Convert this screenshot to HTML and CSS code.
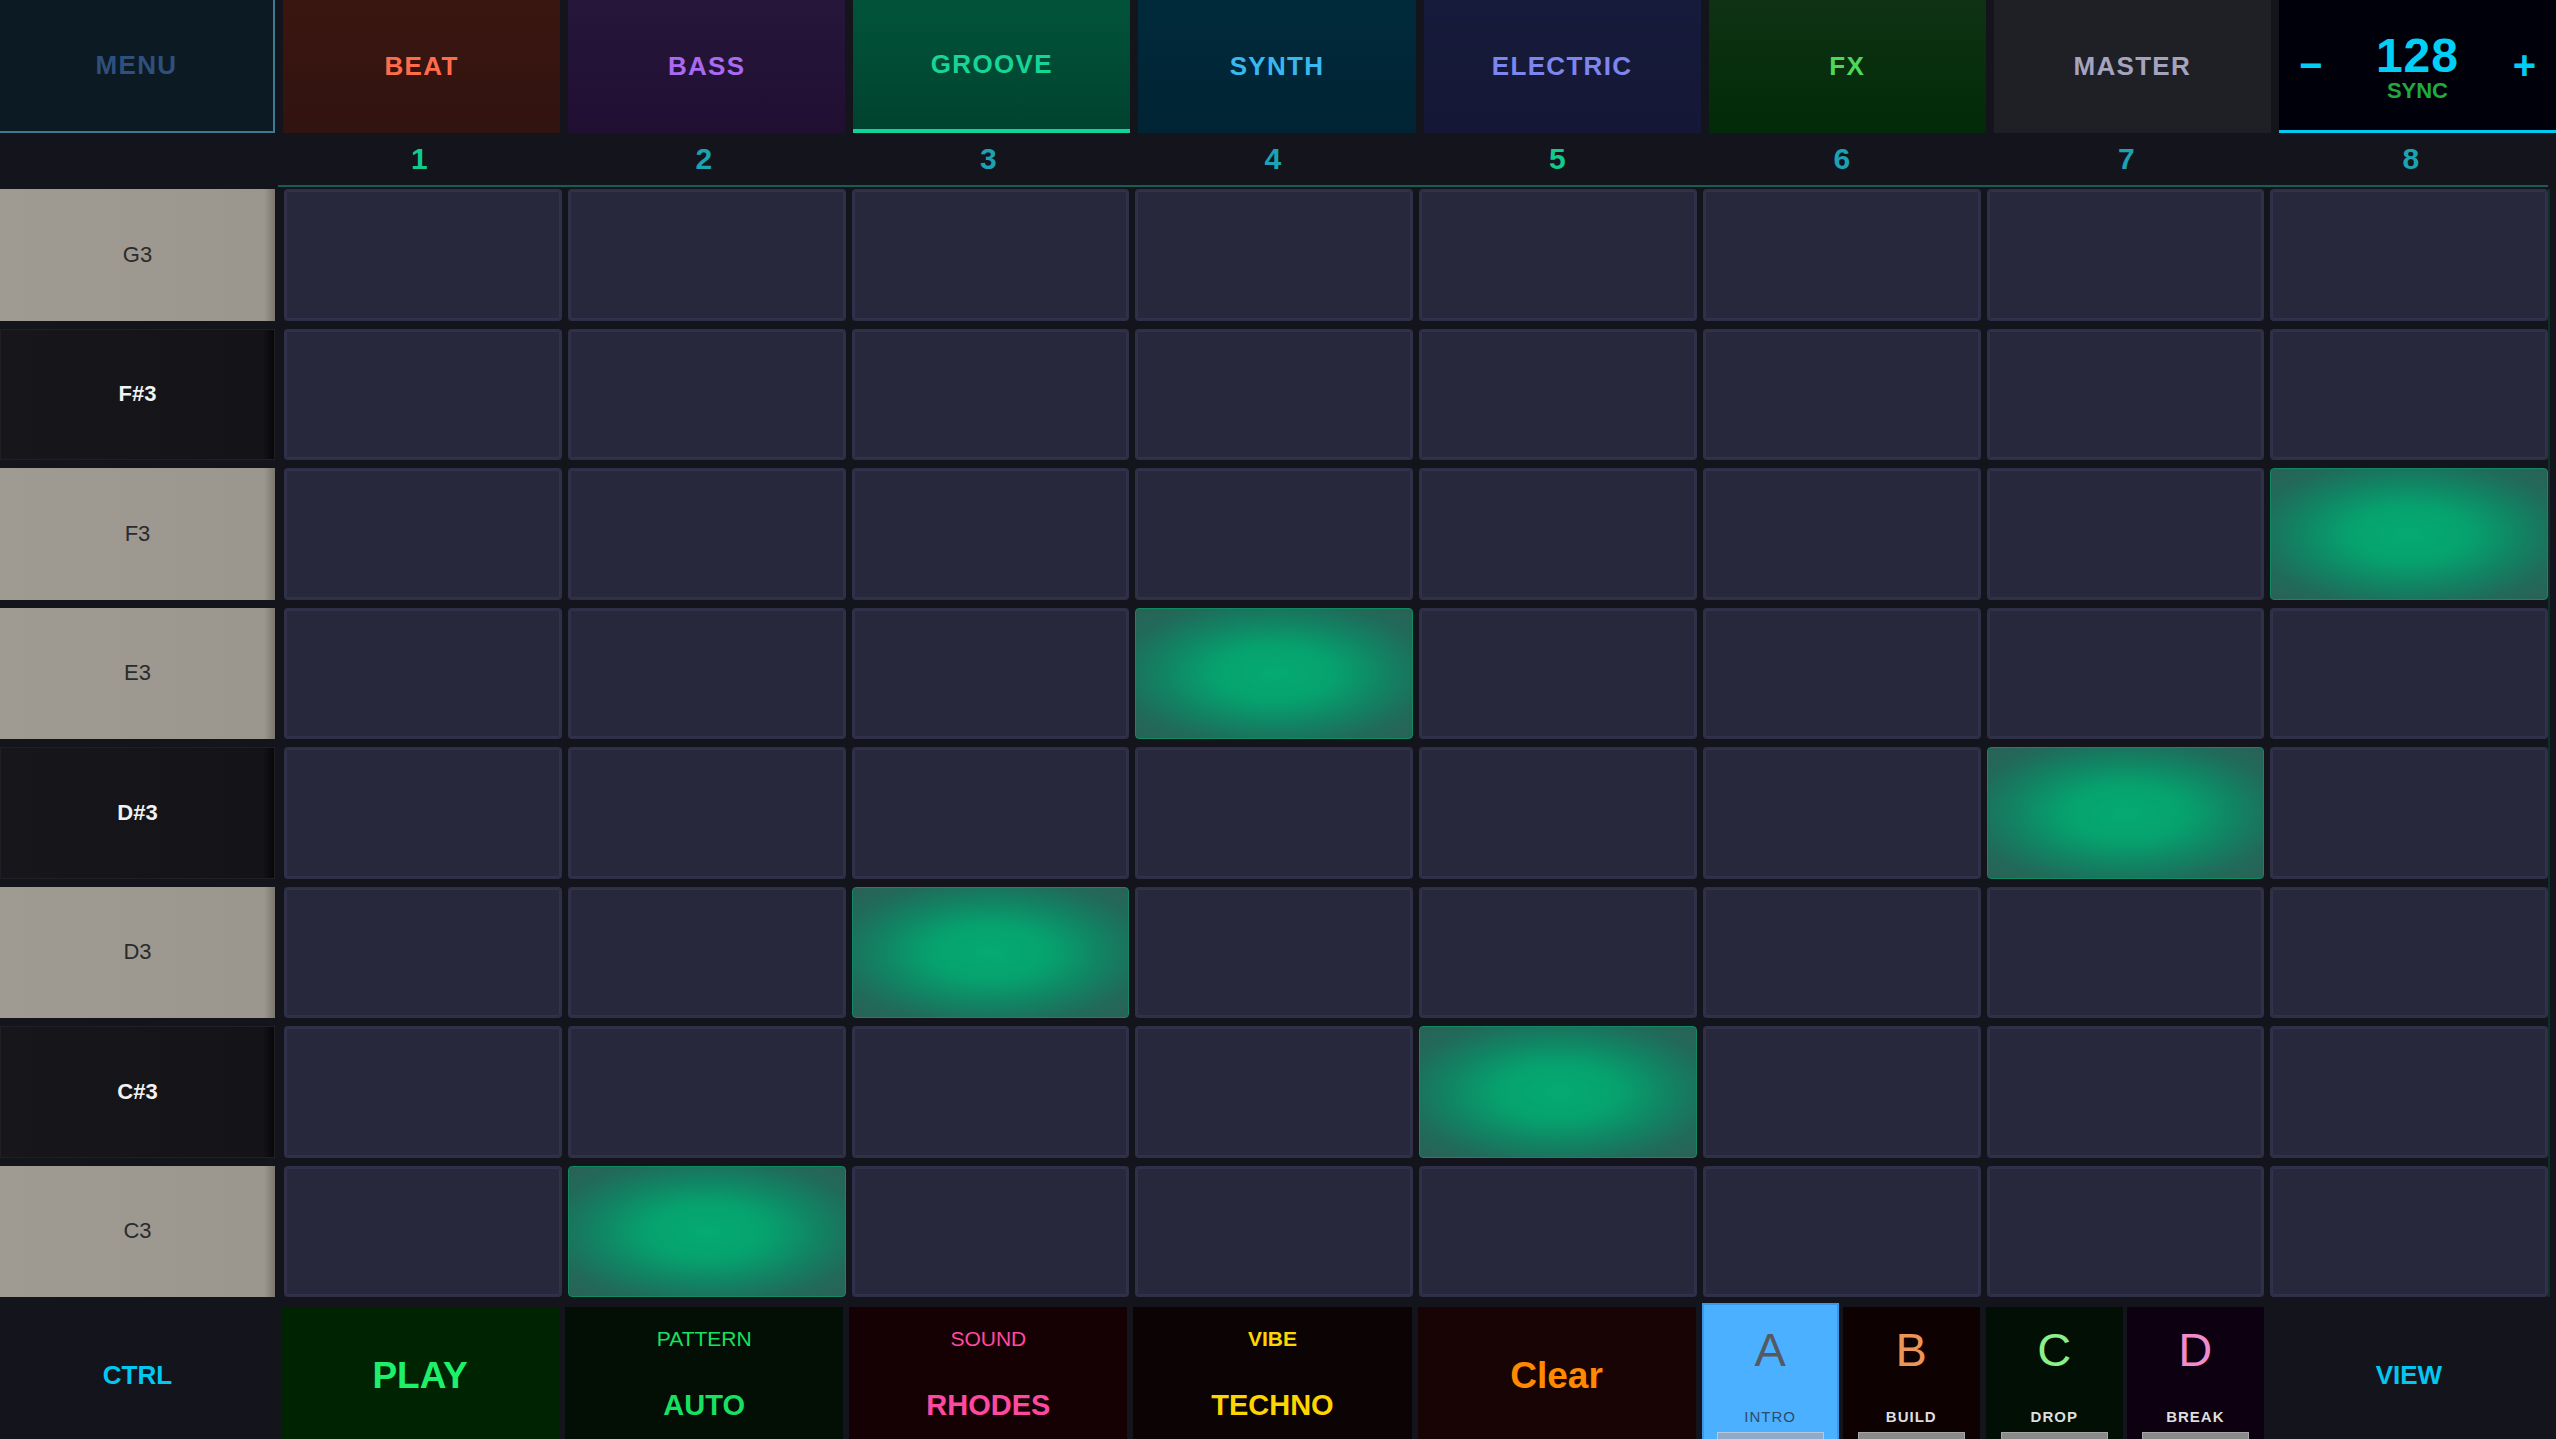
FILE: index.html
```html
<!DOCTYPE html>
<html lang="en">
<head>
    <meta charset="UTF-8">
    <meta name="viewport" content="width=device-width, initial-scale=1.0">
    <title>Groove Sequencer</title>
    <link rel="stylesheet" href="styles.css">
</head>
<body>
    <div class="app">
        <nav class="tabs">
            <div class="tab tab-menu">MENU</div>
            <div class="tab tab-beat">BEAT</div>
            <div class="tab tab-bass">BASS</div>
            <div class="tab tab-groove">GROOVE</div>
            <div class="tab tab-synth">SYNTH</div>
            <div class="tab tab-electric">ELECTRIC</div>
            <div class="tab tab-fx">FX</div>
            <div class="tab tab-master">MASTER</div>
            <div class="tab tab-bpm">
                <span class="bpm-btn">&minus;</span>
                <div class="bpm-value">
                    <span class="bpm-num">128</span>
                    <span class="bpm-sync">SYNC</span>
                </div>
                <span class="bpm-btn">+</span>
            </div>
        </nav>

        <div class="steps">
            <div class="step-nums">
                <div class="step down">1</div>
                <div class="step">2</div>
                <div class="step">3</div>
                <div class="step">4</div>
                <div class="step down">5</div>
                <div class="step">6</div>
                <div class="step">7</div>
                <div class="step">8</div>
            </div>
        </div>

        <div class="roll" id="roll"></div>

        <footer class="controls">
            <div class="ctl ctl-text">CTRL</div>
            <div class="ctl ctl-play">PLAY</div>
            <div class="ctl ctl-dual ctl-pattern">
                <span class="ctl-label">PATTERN</span>
                <span class="ctl-value">AUTO</span>
            </div>
            <div class="ctl ctl-dual ctl-sound">
                <span class="ctl-label">SOUND</span>
                <span class="ctl-value">RHODES</span>
            </div>
            <div class="ctl ctl-dual ctl-vibe">
                <span class="ctl-label">VIBE</span>
                <span class="ctl-value">TECHNO</span>
            </div>
            <div class="ctl ctl-clear">Clear</div>
            <div class="pads">
                <div class="pad pad-a">
                    <span class="pad-letter">A</span>
                    <span class="pad-name">INTRO</span>
                    <span class="pad-bar"></span>
                </div>
                <div class="pad pad-b">
                    <span class="pad-letter">B</span>
                    <span class="pad-name">BUILD</span>
                    <span class="pad-bar"></span>
                </div>
            </div>
            <div class="pads">
                <div class="pad pad-c">
                    <span class="pad-letter">C</span>
                    <span class="pad-name">DROP</span>
                    <span class="pad-bar"></span>
                </div>
                <div class="pad pad-d">
                    <span class="pad-letter">D</span>
                    <span class="pad-name">BREAK</span>
                    <span class="pad-bar"></span>
                </div>
            </div>
            <div class="ctl ctl-text">VIEW</div>
        </footer>
    </div>

    <script>
        const notes = ['G3', 'F#3', 'F3', 'E3', 'D#3', 'D3', 'C#3', 'C3'];
        // step that is switched on for each note
        const active = { 'F3': 8, 'E3': 4, 'D#3': 7, 'D3': 3, 'C#3': 5, 'C3': 2 };

        const roll = document.getElementById('roll');
        notes.forEach(note => {
            const row = document.createElement('div');
            row.className = 'row';

            const key = document.createElement('div');
            key.className = 'key ' + (note.includes('#') ? 'key-black' : 'key-white');
            key.innerText = note;
            row.appendChild(key);

            for (let step = 1; step <= 8; step++) {
                const cell = document.createElement('div');
                cell.className = 'cell' + (active[note] === step ? ' on' : '');
                row.appendChild(cell);
            }
            roll.appendChild(row);
        });
    </script>
</body>
</html>
```

FILE: styles.css
```css
body {
    margin: 0;
    background: #14141c;
    font-family: 'Liberation Sans', Arial, sans-serif;
}
.app {
    width: 2556px;
    height: 1439px;
    overflow: hidden;
    display: flex;
    flex-direction: column;
}

/* top tabs */
.tabs {
    display: grid;
    grid-template-columns: 275px repeat(8, 1fr);
    column-gap: 8px;
    height: 133px;
    flex-shrink: 0;
}
.tab {
    display: flex;
    align-items: center;
    justify-content: center;
    font-size: 26px;
    font-weight: bold;
    letter-spacing: 1.3px;
    box-sizing: border-box;
}
.tab-menu {
    background: #0b1a23;
    color: #2f507d;
    border-right: 2px solid #3b7b94;
    border-bottom: 2px solid #3b7b94;
}
.tab-beat {
    background: linear-gradient(#3b1610, #311310);
    color: #ff6c4b;
}
.tab-bass {
    background: linear-gradient(#25163a, #210f32);
    color: #aa6af0;
}
.tab-groove {
    background: linear-gradient(#02533a, #00432f);
    color: #16d596;
    border-bottom: 4px solid #12d49a;
}
.tab-synth {
    background: linear-gradient(#002a3b, #002434);
    color: #3ab7ee;
}
.tab-electric {
    background: linear-gradient(#171b3b, #141735);
    color: #7d85ee;
}
.tab-fx {
    background: linear-gradient(#0f3214, #012a08);
    color: #4ed85a;
}
.tab-master {
    background: #1f1f26;
    color: #a5a3be;
}
.tab-bpm {
    background: #00000a;
    border-bottom: 3px solid #00c9f2;
    justify-content: space-between;
    padding: 0 20px;
    letter-spacing: 0;
}
.bpm-btn {
    color: #00cdf5;
    font-size: 40px;
}
.bpm-value {
    display: flex;
    flex-direction: column;
    align-items: center;
    margin-top: 4px;
}
.bpm-num {
    color: #00cff6;
    font-size: 48px;
    line-height: 48px;
    letter-spacing: 1px;
}
.bpm-sync {
    color: #22a93d;
    font-size: 22px;
    line-height: 22px;
}

/* step numbers */
.steps {
    display: grid;
    grid-template-columns: 278px 1fr;
    height: 54px;
    margin-right: 8px;
    flex-shrink: 0;
}
.step-nums {
    grid-column: 2;
    display: grid;
    grid-template-columns: repeat(8, 1fr);
    column-gap: 6px;
    border-bottom: 2px solid #1b5c52;
}
.step {
    display: flex;
    align-items: center;
    justify-content: center;
    padding-left: 4px;
    font-size: 30px;
    font-weight: bold;
    color: #1ca3b3;
}
.step.down {
    color: #12c98e;
}

/* piano roll */
.roll {
    display: grid;
    grid-template-rows: repeat(8, 1fr);
    row-gap: 8px;
    height: 1108px;
    margin-top: 2px;
    margin-right: 6px;
    border-right: 2px solid #0f2f2b;
    flex-shrink: 0;
}
.row {
    display: grid;
    grid-template-columns: 278px repeat(8, 1fr);
    column-gap: 6px;
}
.key {
    width: 275px;
    box-sizing: border-box;
    display: flex;
    align-items: center;
    justify-content: center;
    font-size: 22px;
}
.key-white {
    background: linear-gradient(to right, #9f9b93 0%, #9b978e 96%, #7a766e 100%);
    color: #2b2b2b;
}
.key-black {
    background: linear-gradient(to right, #16161b 0%, #131318 96%, #08080b 100%);
    border: 1px solid #1f1f25;
    color: #f2f2f2;
    font-weight: bold;
}
.cell {
    background: #28283c;
    border: 2px solid #302f48;
    border-radius: 4px;
    box-shadow: inset 0 0 0 1px #33324c;
}
.cell.on {
    background: radial-gradient(ellipse farthest-corner at center, #05aa72 0%, #06a26e 30%, #128262 58%, #216a5a 80%, #2a6157 100%);
    border: 1px solid #0f8a63;
    box-shadow: none;
}

/* bottom controls */
.controls {
    display: grid;
    grid-template-columns: 275px repeat(8, 1fr);
    column-gap: 6px;
    height: 132px;
    margin-top: 10px;
    padding-right: 8px;
    flex-shrink: 0;
}
.ctl {
    display: flex;
    flex-direction: column;
    align-items: center;
    justify-content: center;
    font-weight: bold;
}
.ctl-text {
    color: #00c8f0;
    font-size: 26px;
}
.ctl-play {
    background: #002402;
    color: #1ef06c;
    font-size: 37px;
}
.ctl-dual {
    gap: 37px;
    padding-bottom: 3px;
}
.ctl-label {
    font-size: 21px;
    line-height: 24px;
    font-weight: normal;
}
.ctl-value {
    font-size: 29px;
    line-height: 34px;
}
.ctl-pattern {
    background: #030e05;
    color: #18e060;
}
.ctl-sound {
    background: #150104;
    color: #ff49a0;
}
.ctl-vibe {
    background: #0b0304;
    color: #ffd500;
}
.ctl-vibe .ctl-label {
    font-weight: bold;
}
.ctl-clear {
    background: #180404;
    color: #ff8a00;
    font-size: 37px;
}

.pads {
    display: grid;
    grid-template-columns: 1fr 1fr;
    column-gap: 4px;
}
.pad {
    display: flex;
    flex-direction: column;
    align-items: center;
    padding-top: 18px;
    box-sizing: border-box;
}
.pad-letter {
    font-size: 47px;
    line-height: 50px;
}
.pad-name {
    margin-top: 32px;
    font-size: 15px;
    line-height: 20px;
    font-weight: bold;
    letter-spacing: 1px;
    color: #dedede;
}
.pad-bar {
    width: 105px;
    height: 10px;
    margin-top: 5px;
    flex-shrink: 0;
    background: #8a8a8a;
    border: 1px solid #a6a6a6;
}
.pad-a {
    background: #4ab0ff;
    border: 2px solid #3b98e6;
    border-bottom: none;
    margin-top: -4px;
    padding-top: 20px;
}
.pad-a .pad-letter {
    color: #555962;
}
.pad-a .pad-name {
    color: #2f4c6b;
    font-weight: normal;
}
.pad-a .pad-bar {
    background: #8fa9c9;
    border-color: #b4c8e0;
}
.pad-b {
    background: #0d0102;
}
.pad-b .pad-letter {
    color: #eb9657;
}
.pad-c {
    background: #010f04;
}
.pad-c .pad-letter {
    color: #8cf08a;
}
.pad-d {
    background: #0c0011;
}
.pad-d .pad-letter {
    color: #f08ccc;
}
```
